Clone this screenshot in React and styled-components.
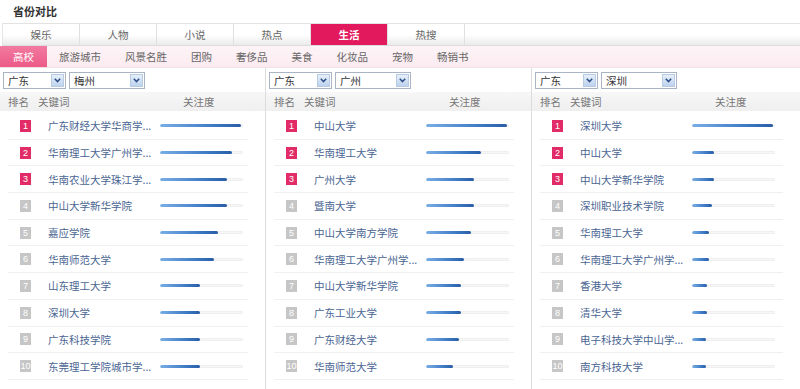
import React from "react";
import styled, { createGlobalStyle } from "styled-components";

const Global = createGlobalStyle`
  body {
    margin: 0;
    background: #fff;
    font-family: "Noto Sans CJK SC", "Liberation Sans", sans-serif;
    font-size: 10.5px;
    color: #333;
  }
`;

const Page = styled.div`
  width: 800px;
  height: 389px;
  overflow: hidden;
`;

const Title = styled.div`
  height: 23px;
  line-height: 22px;
  padding-left: 13px;
  font-size: 11px;
  font-weight: bold;
  color: #333;
`;

const TabBar = styled.div`
  display: flex;
  box-sizing: border-box;
  height: 23px;
  margin-left: 2px;
  border-top: 1px solid #e2e2e2;
  border-bottom: 1px solid #dcdcdc;
  border-left: 1px solid #e6e6e6;
  background: linear-gradient(#ffffff, #ffffff 50%, #ebebeb);
`;

const Tab = styled.div`
  width: 76px;
  border-right: 1px solid #e0e0e0;
  text-align: center;
  line-height: 21px;
  color: ${(p) => (p.$active ? "#fff" : "#666")};
  font-weight: ${(p) => (p.$active ? "bold" : "normal")};
  background: ${(p) => (p.$active ? "#e3195d" : "transparent")};
`;

const SubBar = styled.div`
  display: flex;
  box-sizing: border-box;
  height: 22px;
  background: linear-gradient(#fdf4f7, #fbebf0);
  border-bottom: 1px solid #f3e0e6;
`;

const SubTab = styled.div`
  padding: 0 12px;
  width: ${(p) => (p.$active ? "47px" : "auto")};
  box-sizing: border-box;
  text-align: center;
  line-height: 21px;
  color: ${(p) => (p.$active ? "#fff" : "#666")};
  background: ${(p) => (p.$active ? "linear-gradient(#f27aa0, #ec5a88)" : "transparent")};
`;

const Columns = styled.div`
  display: grid;
  grid-template-columns: 266px 266px 268px;
`;

const Column = styled.div`
  border-right: ${(p) => (p.$last ? "none" : "1px solid #dcdcdc")};
  height: 321px;
`;

const SelectRow = styled.div`
  display: flex;
  gap: 3px;
  padding: 4px 3px 3px;
`;

const Select = styled.div`
  display: flex;
  align-items: center;
  justify-content: space-between;
  box-sizing: border-box;
  width: ${(p) => p.$w}px;
  height: 17px;
  padding: 0 1px 0 4px;
  border: 1px solid #a9b5c4;
  background: #fff;
  color: #333;
`;

const DropBtn = styled.span`
  display: flex;
  align-items: center;
  justify-content: center;
  width: 13px;
  height: 13px;
  background: linear-gradient(#e6effa, #bdd3ee);
  border: 1px solid #b9cbe3;
  box-sizing: border-box;
`;

const HeadRow = styled.div`
  display: flex;
  height: 19px;
  line-height: 19px;
  background: linear-gradient(#f7f7f7, #efefef);
  color: #777;
  padding-left: 8px;
`;

const HeadCell = styled.span`
  width: ${(p) => p.$w}px;
`;

const List = styled.div`
  padding: 2px 17px 0 8px;
`;

const Row = styled.div`
  display: flex;
  align-items: center;
  box-sizing: border-box;
  height: 26.7px;
  border-bottom: 1px solid #f0f0f0;
`;

const Rank = styled.span`
  width: 11px;
  height: 12px;
  margin-left: 12px;
  margin-right: 17px;
  background: ${(p) => (p.$top ? "#e22c67" : "#c6c6c6")};
  color: #fff;
  font-size: 9px;
  line-height: 12px;
  text-align: center;
  font-family: "Liberation Sans", sans-serif;
`;

const Keyword = styled.span`
  width: 112px;
  color: #4a6592;
  white-space: nowrap;
  overflow: hidden;
`;

const Track = styled.div`
  width: 83px;
  height: 3px;
  border-radius: 2px;
  background: #f7f7f7;
  box-shadow: inset 0 0 0 1px #efefef;
  overflow: hidden;
`;

const Fill = styled.div`
  height: 3px;
  border-radius: 2px;
  background: linear-gradient(90deg, #79aee6, #3a76c2 70%, #2a5ea6);
`;

const Chevron = () => (
  <svg width="7" height="5" viewBox="0 0 7 5">
    <path d="M0.8 0.8 L3.5 3.6 L6.2 0.8" fill="none" stroke="#2d4f86" strokeWidth="1.5" />
  </svg>
);

const tabs = ["娱乐", "人物", "小说", "热点", "生活", "热搜"];
const subs = ["高校", "旅游城市", "风景名胜", "团购", "奢侈品", "美食", "化妆品", "宠物", "畅销书"];

const data = [
  {
    city: "梅州",
    items: [
      ["广东财经大学华商学...", 81],
      ["华南理工大学广州学...", 72],
      ["华南农业大学珠江学...", 67],
      ["中山大学新华学院", 67],
      ["嘉应学院", 58],
      ["华南师范大学", 54],
      ["山东理工大学", 40],
      ["深圳大学", 40],
      ["广东科技学院", 40],
      ["东莞理工学院城市学...", 40],
    ],
  },
  {
    city: "广州",
    items: [
      ["中山大学", 81],
      ["华南理工大学", 55],
      ["广州大学", 48],
      ["暨南大学", 48],
      ["中山大学南方学院", 45],
      ["华南理工大学广州学...", 38],
      ["中山大学新华学院", 35],
      ["广东工业大学", 35],
      ["广东财经大学", 33],
      ["华南师范大学", 27],
    ],
  },
  {
    city: "深圳",
    items: [
      ["深圳大学", 81],
      ["中山大学", 22],
      ["中山大学新华学院", 22],
      ["深圳职业技术学院", 20],
      ["华南理工大学", 17],
      ["华南理工大学广州学...", 17],
      ["香港大学", 15],
      ["清华大学", 15],
      ["电子科技大学中山学...", 14],
      ["南方科技大学", 14],
    ],
  },
];

export default function App() {
  return (
    <Page>
      <Global />
      <Title>省份对比</Title>
      <TabBar>
        {tabs.map((t) => (
          <Tab key={t} $active={t === "生活"}>
            {t}
          </Tab>
        ))}
      </TabBar>
      <SubBar>
        {subs.map((s) => (
          <SubTab key={s} $active={s === "高校"}>
            {s}
          </SubTab>
        ))}
      </SubBar>
      <Columns>
        {data.map((col, ci) => (
          <Column key={col.city} $last={ci === 2}>
            <SelectRow>
              <Select $w={63}>
                广东
                <DropBtn>
                  <Chevron />
                </DropBtn>
              </Select>
              <Select $w={76}>
                {col.city}
                <DropBtn>
                  <Chevron />
                </DropBtn>
              </Select>
            </SelectRow>
            <HeadRow>
              <HeadCell $w={30}>排名</HeadCell>
              <HeadCell $w={145}>关键词</HeadCell>
              <HeadCell $w={40}>关注度</HeadCell>
            </HeadRow>
            <List>
              {col.items.map(([name, v], i) => (
                <Row key={name + i}>
                  <Rank $top={i < 3}>{i + 1}</Rank>
                  <Keyword>{name}</Keyword>
                  <Track>
                    <Fill style={{ width: `${v}px` }} />
                  </Track>
                </Row>
              ))}
            </List>
          </Column>
        ))}
      </Columns>
    </Page>
  );
}
